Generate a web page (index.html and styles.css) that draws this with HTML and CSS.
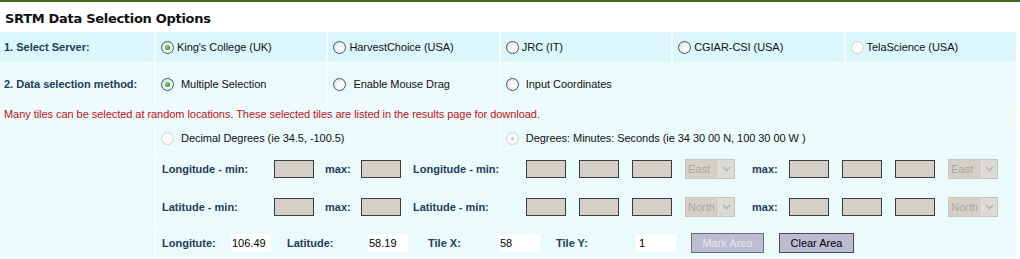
FILE: index.html
```html
<!DOCTYPE html>
<html lang="en">
    <head>
        <meta charset="UTF-8">
        <title>SRTM Data Selection Options</title>
        <link rel="stylesheet" href="styles.css">
    </head>

    <body>
        <div class="topbar"></div>
        <h2 class="title">SRTM Data Selection Options</h2>

        <div class="options">
            <!-- server choice -->
            <div class="row server">
                <div class="cell head">1. Select Server:</div>
                <div class="cell"><label class="opt"><span class="radio on"></span>King's College (UK)</label></div>
                <div class="cell"><label class="opt"><span class="radio"></span>HarvestChoice (USA)</label></div>
                <div class="cell"><label class="opt"><span class="radio"></span>JRC (IT)</label></div>
                <div class="cell"><label class="opt"><span class="radio"></span>CGIAR-CSI (USA)</label></div>
                <div class="cell"><label class="opt off"><span class="radio"></span>TelaScience (USA)</label></div>
            </div>

            <!-- selection method -->
            <div class="row method">
                <div class="cell head">2. Data selection method:</div>
                <div class="cell"><label class="opt wide"><span class="radio on"></span>Multiple Selection</label></div>
                <div class="cell"><label class="opt wide"><span class="radio"></span>Enable Mouse Drag</label></div>
                <div class="cell span3"><label class="opt wide"><span class="radio"></span>Input Coordinates</label></div>
            </div>

            <div class="note">Many tiles can be selected at random locations. These selected tiles are listed in the results page for download.</div>

            <!-- coordinate format -->
            <div class="row format">
                <div class="cell"></div>
                <div class="cell span2"><label class="opt wide"><span class="radio off"></span>Decimal Degrees (ie 34.5, -100.5)</label></div>
                <div class="cell span3"><label class="opt wide"><span class="radio off dot"></span>Degrees: Minutes: Seconds (ie 34 30 00 N, 100 30 00 W )</label></div>
            </div>

            <!-- coordinate inputs -->
            <div class="row coords">
                <div class="cell"></div>
                <div class="cell span5">
                    <div class="coord-grid">
                        <span class="lbl">Longitude - min:</span>
                        <span class="box"></span>
                        <span class="lbl">max:</span>
                        <span class="box"></span>
                        <span class="lbl">Longitude - min:</span>
                        <span class="box"></span>
                        <span class="box"></span>
                        <span class="box"></span>
                        <span class="sel"><span>East</span><span class="arrow"><svg width="9" height="6" viewBox="0 0 9 6"><path d="M1 1 L4.5 4.5 L8 1" fill="none" stroke="#b4b4b4" stroke-width="1.6"/></svg></span></span>
                        <span class="lbl">max:</span>
                        <span class="box"></span>
                        <span class="box"></span>
                        <span class="box"></span>
                        <span class="sel"><span>East</span><span class="arrow"><svg width="9" height="6" viewBox="0 0 9 6"><path d="M1 1 L4.5 4.5 L8 1" fill="none" stroke="#b4b4b4" stroke-width="1.6"/></svg></span></span>

                        <span class="lbl">Latitude - min:</span>
                        <span class="box"></span>
                        <span class="lbl">max:</span>
                        <span class="box"></span>
                        <span class="lbl">Latitude - min:</span>
                        <span class="box"></span>
                        <span class="box"></span>
                        <span class="box"></span>
                        <span class="sel"><span>North</span><span class="arrow"><svg width="9" height="6" viewBox="0 0 9 6"><path d="M1 1 L4.5 4.5 L8 1" fill="none" stroke="#b4b4b4" stroke-width="1.6"/></svg></span></span>
                        <span class="lbl">max:</span>
                        <span class="box"></span>
                        <span class="box"></span>
                        <span class="box"></span>
                        <span class="sel"><span>North</span><span class="arrow"><svg width="9" height="6" viewBox="0 0 9 6"><path d="M1 1 L4.5 4.5 L8 1" fill="none" stroke="#b4b4b4" stroke-width="1.6"/></svg></span></span>
                    </div>
                </div>
            </div>

            <!-- current position -->
            <div class="row values">
                <div class="cell"></div>
                <div class="cell span5">
                    <div class="value-grid">
                        <span class="lbl">Longitute:</span>
                        <span class="val">106.49</span>
                        <span class="lbl">Latitude:</span>
                        <span class="val">58.19</span>
                        <span class="lbl">Tile X:</span>
                        <span class="val x">58</span>
                        <span class="lbl">Tile Y:</span>
                        <span class="val y">1</span>
                        <button class="btn" disabled>Mark Area</button>
                        <button class="btn">Clear Area</button>
                    </div>
                </div>
            </div>
        </div>
    </body>
</html>
```

FILE: styles.css
```css
body {
    margin: 0;
    padding: 0;
    background-color: #fff;
    font-family: "Liberation Sans", Arial, sans-serif;
    font-size: 11px;
    color: #000;
}

.topbar {
    height: 2px;
    background-color: #3f6a1b;
}

.title {
    margin: 0;
    height: 30px;
    padding-left: 5px;
    font-family: "DejaVu Sans", Verdana, sans-serif;
    font-size: 13px;
    font-weight: bold;
    letter-spacing: -0.3px;
    line-height: 34px;
    color: #111;
}

.options {
    width: 1016px;
    display: flex;
    flex-direction: column;
    gap: 1px;
    background-color: #f6fdfd;
}

.row {
    display: grid;
    grid-template-columns: 154px repeat(5, 1fr);
    column-gap: 2px;
}

.cell {
    display: flex;
    align-items: center;
    background-color: #ebfafa;
}

.server .cell {
    height: 30px;
    background-color: #dbf7fb;
}

.method .cell {
    height: 42px;
}

.format .cell {
    height: 28px;
}

.values .cell {
    height: 34px;
}

.span2 {
    grid-column: span 2;
}

.span3 {
    grid-column: span 3;
}

.span5 {
    grid-column: span 5;
}

.head {
    padding-left: 4px;
    font-weight: bold;
    color: #1d3d5e;
}

.opt {
    display: flex;
    align-items: center;
    padding-left: 5px;
    color: #111;
    letter-spacing: -0.05px;
}

.opt.wide .radio {
    margin-right: 7px;
}

.radio {
    width: 11px;
    height: 11px;
    margin-right: 3px;
    border: 1px solid #39577a;
    border-radius: 50%;
    background: radial-gradient(circle at 65% 65%, #ffffff 0%, #f4f4f0 45%, #d4d4cc 100%);
    position: relative;
}

.radio.on::after {
    content: "";
    position: absolute;
    left: 3px;
    top: 3px;
    width: 5px;
    height: 5px;
    border-radius: 50%;
    background: radial-gradient(circle at 40% 40%, #7fe07f 0%, #27a727 60%, #1b7f1b 100%);
}

.off .radio,
.radio.off {
    border-color: #d0d0c8;
    background: #fbfbfb;
}

.radio.dot::after {
    content: "";
    position: absolute;
    left: 4px;
    top: 4px;
    width: 3px;
    height: 3px;
    border-radius: 50%;
    background-color: #c4c4bc;
}

.note {
    height: 17px;
    line-height: 17px;
    padding-left: 4px;
    color: #c0111a;
    letter-spacing: -0.05px;
    background-color: #eefbfb;
}

.coords .cell {
    padding: 6px 0 8px 6px;
}

.coord-grid {
    display: grid;
    grid-template-columns: 112px 51px 36px 52px 113px 53px 53px 53px 67px 37px 53px 53px 53px 50px;
    grid-auto-rows: 20px;
    row-gap: 18px;
    align-items: center;
}

.lbl {
    font-weight: bold;
    color: #1d3d5e;
}

.box {
    width: 38px;
    height: 16px;
    border: 1px solid #3c3c3c;
    background-color: #d4d0c8;
}

.sel {
    display: flex;
    justify-content: space-between;
    width: 48px;
    height: 18px;
    border: 1px solid #c6c6c0;
    background-color: #d4d0c8;
    color: #a8a8a0;
    line-height: 18px;
}

.sel span:first-child {
    padding-left: 2px;
}

.arrow {
    display: flex;
    align-items: center;
    justify-content: center;
    width: 15px;
    border-left: 1px solid #e4e2dc;
    background-color: #dcdad4;
}

.values .cell {
    padding-left: 6px;
}

.value-grid {
    display: grid;
    grid-template-columns: 69px 56px 81px 60px 71px 57px 80px 55px 88px 75px;
    align-items: center;
}

.val {
    width: 39px;
    height: 18px;
    padding-left: 1px;
    line-height: 18px;
    background-color: #fff;
}

.val.x {
    width: 40px;
}

.val.y {
    padding-left: 3px;
    width: 37px;
}

.btn {
    height: 20px;
    margin: 0;
    padding: 0;
    font-family: "Liberation Sans", Arial, sans-serif;
    font-size: 11px;
    color: #000;
    border: 1px solid #4a4a5c;
    background-color: #bcbcd2;
}

.btn:first-of-type {
    width: 73px;
}

.btn:last-of-type {
    width: 75px;
}

.btn:disabled {
    color: #e6e6ee;
    border-color: #6a6a80;
}
```
